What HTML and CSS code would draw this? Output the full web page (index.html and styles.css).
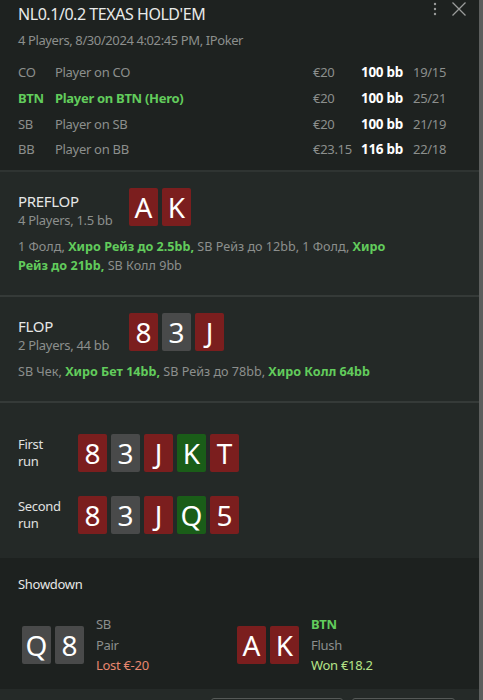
FILE: index.html
```html
<!DOCTYPE html>
<html lang="en">
<head>
  <meta charset="UTF-8" />
  <title>Hand History</title>
  <link rel="stylesheet" href="styles.css">
</head>
<body>
<div class="panel">

  <div class="hand-header">
    <div class="header-tools">
      <svg class="tool-dots" width="6" height="16" viewBox="0 0 6 16"><circle cx="3" cy="3" r="1.2"/><circle cx="3" cy="8" r="1.2"/><circle cx="3" cy="13" r="1.2"/></svg>
      <svg class="tool-close" width="16" height="16" viewBox="0 0 16 16"><path d="M1.5 1.5 L14.5 14.5 M14.5 1.5 L1.5 14.5"/></svg>
    </div>
    <h1 class="hand-title">NL0.1/0.2 TEXAS HOLD'EM</h1>
    <div class="hand-meta">4 Players, 8/30/2024 4:02:45 PM, IPoker</div>

    <div class="players">
      <div class="player-row">
        <span class="pos">CO</span><span class="name">Player on CO</span>
        <span class="stack">€20</span><span class="bb">100 bb</span><span class="stats">19/15</span>
      </div>
      <div class="player-row hero">
        <span class="pos">BTN</span><span class="name">Player on BTN (Hero)</span>
        <span class="stack">€20</span><span class="bb">100 bb</span><span class="stats">25/21</span>
      </div>
      <div class="player-row">
        <span class="pos">SB</span><span class="name">Player on SB</span>
        <span class="stack">€20</span><span class="bb">100 bb</span><span class="stats">21/19</span>
      </div>
      <div class="player-row">
        <span class="pos">BB</span><span class="name">Player on BB</span>
        <span class="stack">€23.15</span><span class="bb">116 bb</span><span class="stats">22/18</span>
      </div>
    </div>
  </div>

  <div class="street">
    <div class="street-top">
      <div class="street-head">
        <div class="street-name">PREFLOP</div>
        <div class="street-info">4 Players, 1.5 bb</div>
      </div>
      <div class="cards">
        <span class="card red">A</span><span class="card red">K</span>
      </div>
    </div>
    <div class="actions">
      <span>1 Фолд,</span> <b>Хиро Рейз до 2.5bb,</b> <span>SB Рейз до 12bb, 1 Фолд,</span> <b>Хиро</b>
      <b>Рейз до 21bb,</b> <span>SB Колл 9bb</span>
    </div>
  </div>

  <div class="street">
    <div class="street-top">
      <div class="street-head">
        <div class="street-name">FLOP</div>
        <div class="street-info">2 Players, 44 bb</div>
      </div>
      <div class="cards">
        <span class="card red">8</span><span class="card grey">3</span><span class="card red">J</span>
      </div>
    </div>
    <div class="actions">
      SB Чек, <b>Хиро Бет 14bb,</b> SB Рейз до 78bb, <b>Хиро Колл 64bb</b>
    </div>
  </div>

  <div class="street runs">
    <div class="run">
      <div class="run-label">First<br>run</div>
      <div class="cards">
        <span class="card red">8</span><span class="card grey">3</span><span class="card red">J</span><span class="card green">K</span><span class="card red">T</span>
      </div>
    </div>
    <div class="run">
      <div class="run-label">Second<br>run</div>
      <div class="cards">
        <span class="card red">8</span><span class="card grey">3</span><span class="card red">J</span><span class="card green">Q</span><span class="card red">5</span>
      </div>
    </div>
  </div>

  <div class="showdown">
    <div class="showdown-title">Showdown</div>
    <div class="showdown-hands">
      <div class="sd-player">
        <div class="cards">
          <span class="card grey">Q</span><span class="card grey">8</span>
        </div>
        <div class="sd-info">
          <div class="sd-pos">SB</div>
          <div class="sd-hand">Pair</div>
          <div class="sd-lost">Lost €-20</div>
        </div>
      </div>
      <div class="sd-player">
        <div class="cards">
          <span class="card red">A</span><span class="card red">K</span>
        </div>
        <div class="sd-info">
          <div class="sd-pos hero">BTN</div>
          <div class="sd-hand">Flush</div>
          <div class="sd-won">Won €18.2</div>
        </div>
      </div>
    </div>
  </div>

  <div class="footer">
    <button class="footer-btn wide"></button>
    <button class="footer-btn"></button>
  </div>

</div>
</body>
</html>
```

FILE: styles.css
```css
body {
  margin: 0;
  background: #1e2220;
  font-family: "Noto Sans", "Open Sans", sans-serif;
  color: #8c8f8d;
  letter-spacing: -0.3px;
  overflow: hidden;
}

.panel {
  width: 479px;
  border-right: 4px solid #5c5e5d;
  min-height: 700px;
}

.hand-header {
  position: relative;
  padding: 3px 18px 8px;
  background: #1e2220;
  border-bottom: 2px solid #2f3432;
}

.header-tools {
  position: absolute;
  top: 1px;
  right: 12px;
  display: flex;
  gap: 13px;
  align-items: center;
}

.tool-dots circle { fill: #9a9c9b; }
.tool-close path { stroke: #9a9c9b; stroke-width: 1.3; fill: none; }

.hand-title {
  margin: 0;
  font-size: 16px;
  font-weight: normal;
  line-height: 22px;
  letter-spacing: -0.45px;
  color: #e9eae9;
}

.hand-meta {
  margin-top: 6px;
  font-size: 13px;
  line-height: 18px;
  letter-spacing: -0.4px;
}

.players {
  margin-top: 10px;
}

.player-row {
  display: flex;
  font-size: 13px;
  line-height: 26px;
  height: 25.8px;
}

.player-row .pos { width: 37px; }
.player-row .name { width: 258px; }
.player-row .stack { width: 48px; }
.player-row .bb {
  width: 52px;
  color: #ffffff;
  font-weight: bold;
  font-size: 13.5px;
}
.player-row .stats { width: 40px; }

.player-row.hero .pos,
.player-row.hero .name {
  color: #62cc5c;
  font-weight: bold;
}

.street {
  background: #242927;
  border-bottom: 2px solid #353a38;
  padding: 16px 18px 20px;
}

.street-top {
  display: flex;
}

.street-head {
  width: 111px;
  padding-top: 3px;
}

.street-name {
  font-size: 15px;
  line-height: 20px;
  color: #e6e7e6;
}

.street-info {
  font-size: 13px;
  line-height: 18px;
}

.cards {
  display: flex;
  gap: 4px;
}

.card {
  width: 29px;
  height: 38px;
  border-radius: 2px;
  display: flex;
  align-items: center;
  justify-content: center;
  font-size: 28px;
  letter-spacing: 0;
  color: #ffffff;
}

.card.red { background: #7b1e1e; }
.card.grey { background: #494a4a; }
.card.green { background: #1a5d18; }

.actions {
  margin-top: 8px;
  font-size: 12.6px;
  line-height: 19px;
  letter-spacing: 0;
  max-width: 390px;
}

.actions b { color: #62cc5c; }

.runs {
  padding: 31px 18px 24px;
  border-bottom: none;
  display: flex;
  flex-direction: column;
  gap: 24px;
}

.run {
  display: flex;
  align-items: center;
}

.run-label {
  width: 60px;
  font-size: 13px;
  line-height: 17px;
  color: #e0e1e0;
}

.showdown {
  background: #1d211f;
  padding: 16px 18px 13px;
}

.showdown-title {
  font-size: 13px;
  line-height: 20px;
  color: #e6e7e6;
}

.showdown-hands {
  display: grid;
  grid-template-columns: 215px 1fr;
  margin-top: 20px;
}

.sd-player {
  display: flex;
  align-items: center;
  gap: 12px;
  padding-left: 4px;
}

.sd-info {
  font-size: 13px;
  line-height: 20.5px;
}

.sd-pos.hero {
  color: #62cc5c;
  font-weight: bold;
}

.sd-lost { color: #e8876f; }
.sd-won { color: #b6e488; }

.footer {
  background: #252a28;
  height: 40px;
  display: flex;
  gap: 9px;
  padding: 9px 0 0 211px;
}

.footer-btn {
  width: 103px;
  height: 30px;
  background: #242927;
  border: 1px solid #555957;
  border-radius: 3px;
}

.footer-btn.wide { width: 132px; }
```
